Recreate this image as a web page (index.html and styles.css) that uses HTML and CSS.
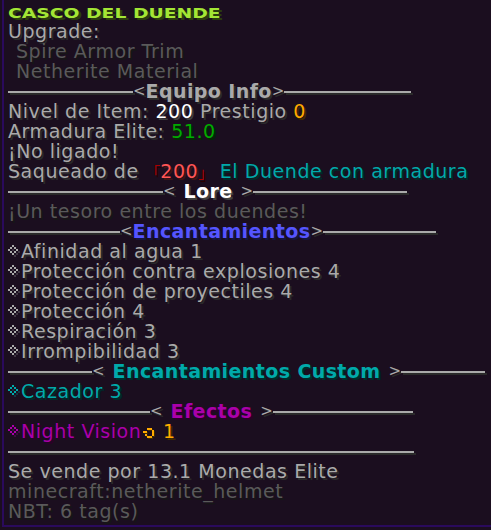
FILE: index.html
```html
<!DOCTYPE html>
<html lang="es">
<head>
    <meta charset="UTF-8">
    <meta name="viewport" content="width=device-width, initial-scale=1.0">
    <title>Casco del Duende</title>
    <link rel="stylesheet" href="styles.css">
</head>
<body>
    <div class="tooltip">
        <div class="title"><span>CASCO DEL DUENDE</span></div>
        <div class="ln c7">Upgrade:</div>
        <div class="ln c8 ind">Spire Armor Trim</div>
        <div class="ln c8 ind">Netherite Material</div>

        <div class="sep equipo">
            <span class="rule left"></span><span class="arr c7">&lt;</span><b class="c7">Equipo Info</b><span class="arr c7">&gt;</span><span class="rule right"></span>
        </div>
        <div class="ln c7">Nivel de Item: <span class="cf">200</span> Prestigio <span class="c6">0</span></div>
        <div class="ln c7">Armadura Elite: <span class="c2">51.0</span></div>
        <div class="ln c7">¡No ligado!</div>
        <div class="ln c7">Saqueado de <span class="c4 brk">「</span><span class="cc">200</span><span class="c4 brk">」</span> <span class="c3">El Duende con armadura</span></div>

        <div class="sep spaced lore">
            <span class="rule left"></span><span class="arr c7">&lt;</span><b class="cf">Lore</b><span class="arr c7">&gt;</span><span class="rule right"></span>
        </div>
        <div class="ln c8">¡Un tesoro entre los duendes!</div>

        <div class="sep ench">
            <span class="rule left"></span><span class="arr c7">&lt;</span><b class="c9">Encantamientos</b><span class="arr c7">&gt;</span><span class="rule right"></span>
        </div>
        <div class="ln c7"><svg class="dia" width="12" height="12" viewBox="0 0 12 12"><path class="sh" d="M6 2h2v2H6zM4 4h2v2H4zM8 4h2v2H8zM2 6h2v2H2zM10 6h2v2h-2zM4 8h2v2H4zM8 8h2v2H8zM6 10h2v2H6z"/><path d="M4 0h2v2H4zM2 2h2v2H2zM6 2h2v2H6zM0 4h2v2H0zM8 4h2v2H8zM2 6h2v2H2zM6 6h2v2H6zM4 8h2v2H4z"/></svg>Afinidad al agua 1</div>
        <div class="ln c7"><svg class="dia" width="12" height="12" viewBox="0 0 12 12"><path class="sh" d="M6 2h2v2H6zM4 4h2v2H4zM8 4h2v2H8zM2 6h2v2H2zM10 6h2v2h-2zM4 8h2v2H4zM8 8h2v2H8zM6 10h2v2H6z"/><path d="M4 0h2v2H4zM2 2h2v2H2zM6 2h2v2H6zM0 4h2v2H0zM8 4h2v2H8zM2 6h2v2H2zM6 6h2v2H6zM4 8h2v2H4z"/></svg>Protección contra explosiones 4</div>
        <div class="ln c7"><svg class="dia" width="12" height="12" viewBox="0 0 12 12"><path class="sh" d="M6 2h2v2H6zM4 4h2v2H4zM8 4h2v2H8zM2 6h2v2H2zM10 6h2v2h-2zM4 8h2v2H4zM8 8h2v2H8zM6 10h2v2H6z"/><path d="M4 0h2v2H4zM2 2h2v2H2zM6 2h2v2H6zM0 4h2v2H0zM8 4h2v2H8zM2 6h2v2H2zM6 6h2v2H6zM4 8h2v2H4z"/></svg>Protección de proyectiles 4</div>
        <div class="ln c7"><svg class="dia" width="12" height="12" viewBox="0 0 12 12"><path class="sh" d="M6 2h2v2H6zM4 4h2v2H4zM8 4h2v2H8zM2 6h2v2H2zM10 6h2v2h-2zM4 8h2v2H4zM8 8h2v2H8zM6 10h2v2H6z"/><path d="M4 0h2v2H4zM2 2h2v2H2zM6 2h2v2H6zM0 4h2v2H0zM8 4h2v2H8zM2 6h2v2H2zM6 6h2v2H6zM4 8h2v2H4z"/></svg>Protección 4</div>
        <div class="ln c7"><svg class="dia" width="12" height="12" viewBox="0 0 12 12"><path class="sh" d="M6 2h2v2H6zM4 4h2v2H4zM8 4h2v2H8zM2 6h2v2H2zM10 6h2v2h-2zM4 8h2v2H4zM8 8h2v2H8zM6 10h2v2H6z"/><path d="M4 0h2v2H4zM2 2h2v2H2zM6 2h2v2H6zM0 4h2v2H0zM8 4h2v2H8zM2 6h2v2H2zM6 6h2v2H6zM4 8h2v2H4z"/></svg>Respiración 3</div>
        <div class="ln c7"><svg class="dia" width="12" height="12" viewBox="0 0 12 12"><path class="sh" d="M6 2h2v2H6zM4 4h2v2H4zM8 4h2v2H8zM2 6h2v2H2zM10 6h2v2h-2zM4 8h2v2H4zM8 8h2v2H8zM6 10h2v2H6z"/><path d="M4 0h2v2H4zM2 2h2v2H2zM6 2h2v2H6zM0 4h2v2H0zM8 4h2v2H8zM2 6h2v2H2zM6 6h2v2H6zM4 8h2v2H4z"/></svg>Irrompibilidad 3</div>

        <div class="sep spaced custom">
            <span class="rule left"></span><span class="arr c7">&lt;</span><b class="c3">Encantamientos Custom</b><span class="arr c7">&gt;</span><span class="rule right"></span>
        </div>
        <div class="ln c3"><svg class="dia" width="12" height="12" viewBox="0 0 12 12"><path class="sh" d="M6 2h2v2H6zM4 4h2v2H4zM8 4h2v2H8zM2 6h2v2H2zM10 6h2v2h-2zM4 8h2v2H4zM8 8h2v2H8zM6 10h2v2H6z"/><path d="M4 0h2v2H4zM2 2h2v2H2zM6 2h2v2H6zM0 4h2v2H0zM8 4h2v2H8zM2 6h2v2H2zM6 6h2v2H6zM4 8h2v2H4z"/></svg>Cazador 3</div>

        <div class="sep spaced efectos">
            <span class="rule left"></span><span class="arr c7">&lt;</span><b class="c5">Efectos</b><span class="arr c7">&gt;</span><span class="rule right"></span>
        </div>
        <div class="ln c5"><svg class="dia" width="12" height="12" viewBox="0 0 12 12"><path class="sh" d="M6 2h2v2H6zM4 4h2v2H4zM8 4h2v2H8zM2 6h2v2H2zM10 6h2v2h-2zM4 8h2v2H4zM8 8h2v2H8zM6 10h2v2H6z"/><path d="M4 0h2v2H4zM2 2h2v2H2zM6 2h2v2H6zM0 4h2v2H0zM8 4h2v2H8zM2 6h2v2H2zM6 6h2v2H6zM4 8h2v2H4z"/></svg>Night Vision<svg class="clock" width="14" height="12" viewBox="0 0 14 12"><path d="M5 2h5M11 3v6M5 10h5M3 8h2M3 4v2M1 5h4" stroke="#3f2a00" stroke-width="2" fill="none" transform="translate(1 1)"/><path d="M5 2h5M11 3v6M5 10h5M3 8h2M3 4v2M1 5h4" stroke="#ffaa00" stroke-width="2" fill="none"/></svg> <span class="c6">1</span></div>

        <div class="sep plain"><span class="rule full"></span></div>
        <div class="ln c7">Se vende por 13.1 Monedas Elite</div>
        <div class="ln c8">minecraft:netherite_helmet</div>
        <div class="ln c8">NBT: 6 tag(s)</div>
    </div>
</body>
</html>
```

FILE: styles.css
```css
html, body {
margin: 0;
padding: 0;
background-color: #1b0e1f;
overflow: hidden;
}

.tooltip {
margin-left: 2px;
height: 527px;
border-left: 2px solid #2a0a5c;
border-bottom: 2px solid #2a0a5c;
padding: 1px 0 0 4px;
box-sizing: border-box;
font-family: "DejaVu Sans", sans-serif;
font-size: 19px;
letter-spacing: 0.55px;
line-height: 20px;
white-space: nowrap;
}

.title {
height: 20px;
}
.title span {
display: inline-block;
font-size: 14px;
font-weight: bold;
letter-spacing: 0;
color: #a3e635;
text-shadow: 2px 2px 0 #2b3d0d;
transform: scaleX(1.34);
transform-origin: left;
margin-top: 1px;
}

.ln {
height: 20px;
}
.ind {
padding-left: 8px;
}

/* colores */
.c2 { color: #00aa00; text-shadow: 2px 2px 0 #002a00; }
.c3 { color: #00aaaa; text-shadow: 2px 2px 0 #002a2a; }
.c4 { color: #aa0000; text-shadow: 2px 2px 0 #2a0000; }
.c5 { color: #aa00aa; text-shadow: 2px 2px 0 #2a002a; }
.c6 { color: #ffaa00; text-shadow: 2px 2px 0 #3f2a00; }
.c7 { color: #aaaaaa; text-shadow: 2px 2px 0 #2a2a2a; }
.c8 { color: #5a5a5a; text-shadow: 2px 2px 0 #161616; }
.c9 { color: #5555ff; text-shadow: 2px 2px 0 #15153f; }
.cc { color: #ff5555; text-shadow: 2px 2px 0 #3f1515; }
.cf { color: #ffffff; text-shadow: 2px 2px 0 #3f3f3f; }

.brk {
font-family: "Noto Sans CJK JP", sans-serif;
font-size: 15px;
letter-spacing: 0;
}

/* separadores */
.sep {
height: 20px;
display: flex;
align-items: center;
}
.sep b {
letter-spacing: 0.4px;
}
.spaced b {
margin: 0 8px;
}
.rule {
display: block;
height: 2px;
margin-top: 2px;
background-color: #aaaaaa;
box-shadow: 2px 2px 0 #2a2a2a;
}
.arr {
font-size: 15px;
letter-spacing: 0;
}
.equipo .left { width: 125px; }
.equipo .right { width: 127px; }
.lore .left { width: 155px; }
.lore .right { width: 154px; }
.ench .left { width: 112px; }
.ench .right { width: 113px; }
.custom .left { width: 84px; }
.custom .right { width: 84px; }
.efectos .left { width: 142px; }
.efectos .right { width: 140px; }
.plain .full { width: 406px; }

.dia {
fill: currentColor;
margin-right: 1px;
vertical-align: 1px;
}
.dia .sh {
opacity: 0.25;
}

.clock {
margin-left: 1px;
vertical-align: -1px;
}
```
